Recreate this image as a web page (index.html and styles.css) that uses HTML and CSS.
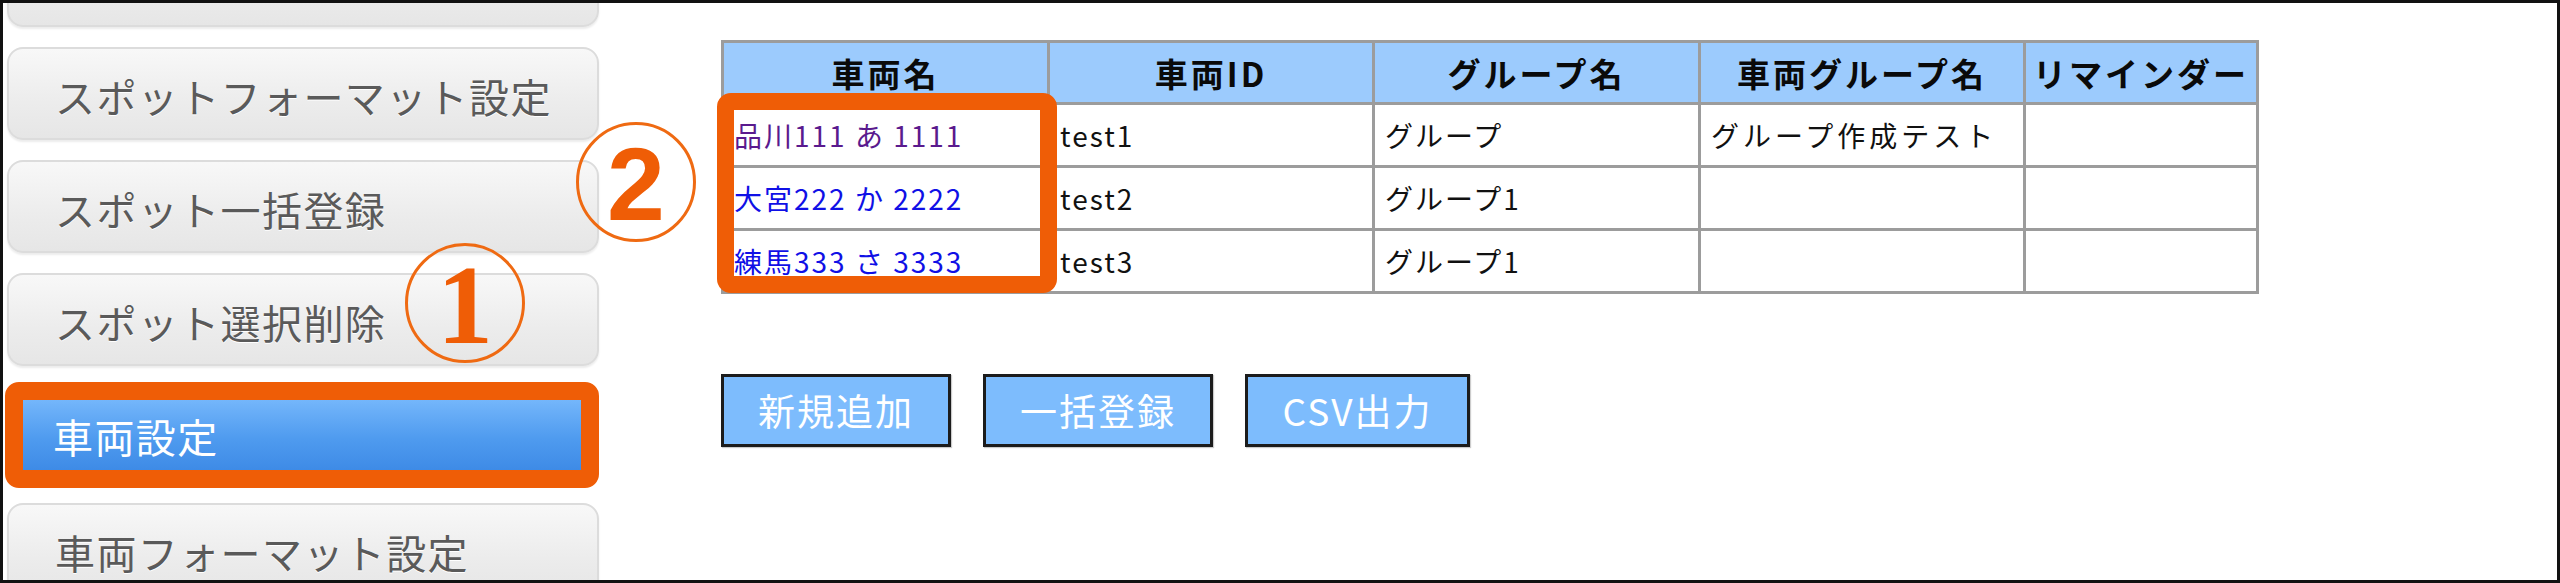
FILE: index.html
```html
<!DOCTYPE html>
<html lang="ja">
<head>
<meta charset="utf-8">
<title>車両設定</title>
<link rel="stylesheet" href="styles.css">
</head>
<body>
<div class="frame">
  <aside class="sidebar">
    <div class="nav-btn nav-cut"></div>
    <div class="nav-btn">スポットフォーマット設定</div>
    <div class="nav-btn">スポット一括登録</div>
    <div class="nav-btn">スポット選択削除</div>
    <div class="nav-sel"><div class="nav-active">車両設定</div></div>
    <div class="nav-btn">車両フォーマット設定</div>
  </aside>
  <main class="main">
    <div class="table-wrap">
      <table class="grid">
        <colgroup>
          <col class="c1"><col class="c2"><col class="c3"><col class="c4"><col class="c5">
        </colgroup>
        <thead>
          <tr><th>車両名</th><th>車両ID</th><th>グループ名</th><th>車両グループ名</th><th>リマインダー</th></tr>
        </thead>
        <tbody>
          <tr><td><a class="lnk visited" href="#">品川111 あ 1111</a></td><td>test1</td><td>グループ</td><td class="kana">グループ作成テスト</td><td></td></tr>
          <tr><td><a class="lnk" href="#">大宮222 か 2222</a></td><td>test2</td><td>グループ1</td><td></td><td></td></tr>
          <tr><td><a class="lnk" href="#">練馬333 さ 3333</a></td><td>test3</td><td>グループ1</td><td></td><td></td></tr>
        </tbody>
      </table>
      <div class="hl-box"></div>
    </div>
    <div class="actions">
      <button class="act">新規追加</button>
      <button class="act">一括登録</button>
      <button class="act act-narrow">CSV出力</button>
    </div>
  </main>
  <div class="badge badge-1">1</div>
  <div class="badge badge-2">2</div>
</div>
</body>
</html>
```

FILE: styles.css
```css
* { box-sizing: border-box; }
html, body { margin: 0; padding: 0; background: #fff; }
body { width: 2560px; height: 583px; overflow: hidden; font-family: "Noto Sans CJK JP", "Noto Sans", sans-serif; }

.frame {
  position: relative;
  width: 2560px;
  height: 583px;
  border: 3px solid #111;
  overflow: hidden;
  display: flex;
  background: #fff;
}

.sidebar {
  width: 596px;
  flex: none;
  padding-left: 4px;
  display: flex;
  flex-direction: column;
  gap: 20px;
}

.nav-btn {
  flex: none;
  width: 592px;
  height: 93px;
  border: 2px solid #dcdcdc;
  border-radius: 16px;
  background: linear-gradient(#f8f8f8, #ececec 60%, #e6e6e6);
  box-shadow: 0 2px 2px rgba(0,0,0,0.08);
  color: #5a5a5a;
  font-size: 40px;
  letter-spacing: 1.4px;
  line-height: 1;
  padding-left: 46px;
  padding-top: 4px;
  display: flex;
  align-items: center;
  text-shadow: 0 1px 0 #fff;
  white-space: nowrap;
}
.nav-cut { margin-top: -69px; }

.nav-sel {
  flex: none;
  width: 594px;
  margin: -4px 0 -5px -2px;
  border: 18px solid #ef5d06;
  border-radius: 14px;
  background: #ef5d06;
}
.nav-active {
  height: 70px;
  background: linear-gradient(#74b6fb, #4f9bef 55%, #3e8be6);
  color: #fff;
  font-size: 40px;
  letter-spacing: 1.4px;
  line-height: 1;
  padding-left: 30px;
  padding-top: 2px;
  display: flex;
  align-items: center;
  white-space: nowrap;
}

.main {
  flex: 1;
  padding-left: 122px;
  padding-top: 37px;
}

.table-wrap { position: relative; width: 1535px; }

.grid {
  border-collapse: collapse;
  table-layout: fixed;
  width: 1535px;
  font-size: 28px;
  letter-spacing: 2px;
  color: #111;
}
.c1 { width: 326px; }
.c2 { width: 325px; }
.c3 { width: 326px; }
.c4 { width: 325px; }
.c5 { width: 233px; }

.grid th, .grid td {
  border: 3px solid #9c9c9c;
  padding: 0 0 0 10px;
  vertical-align: middle;
  white-space: nowrap;
  overflow: hidden;
}
.grid th {
  height: 62px;
  background: #9ccbfd;
  font-size: 33px;
  font-weight: 700;
  letter-spacing: 3px;
  text-align: center;
  padding: 0;
  color: #0a0a0a;
}
.grid td { height: 63px; line-height: 1; }
.grid td.kana { letter-spacing: 4px; }

.lnk { text-decoration: none; color: #1010e6; }
.lnk.visited { color: #5a1a8e; }

.hl-box {
  position: absolute;
  left: -4px;
  top: 53px;
  width: 340px;
  height: 200px;
  border: 17px solid #ef5d06;
  border-radius: 14px;
}

.actions {
  margin-top: 80px;
  display: flex;
  gap: 32px;
}
.act {
  width: 230px;
  height: 73px;
  border: 3px solid #1c1c1c;
  background: #7dbcfd;
  color: #fff;
  font-family: "Noto Sans CJK JP", "Noto Sans", sans-serif;
  font-size: 37px;
  letter-spacing: 2px;
  line-height: 1;
  padding: 0;
  border-radius: 0;
  box-shadow: 1px 1px 1px rgba(0,0,0,0.2);
}
.act-narrow { width: 225px; }

.badge {
  position: absolute;
  width: 120px;
  height: 120px;
  border: 3px solid #ef6a12;
  border-radius: 50%;
  color: #ef5d06;
  display: flex;
  align-items: center;
  justify-content: center;
  line-height: 1;
}
.badge-1 {
  left: 402px;
  top: 240px;
  font-family: "Liberation Serif", serif;
  font-weight: 700;
  font-size: 112px;
  padding-top: 4px;
}
.badge-2 {
  left: 573px;
  top: 119px;
  font-family: "Liberation Sans", sans-serif;
  font-weight: 700;
  font-size: 104px;
  padding-top: 4px;
}
```
